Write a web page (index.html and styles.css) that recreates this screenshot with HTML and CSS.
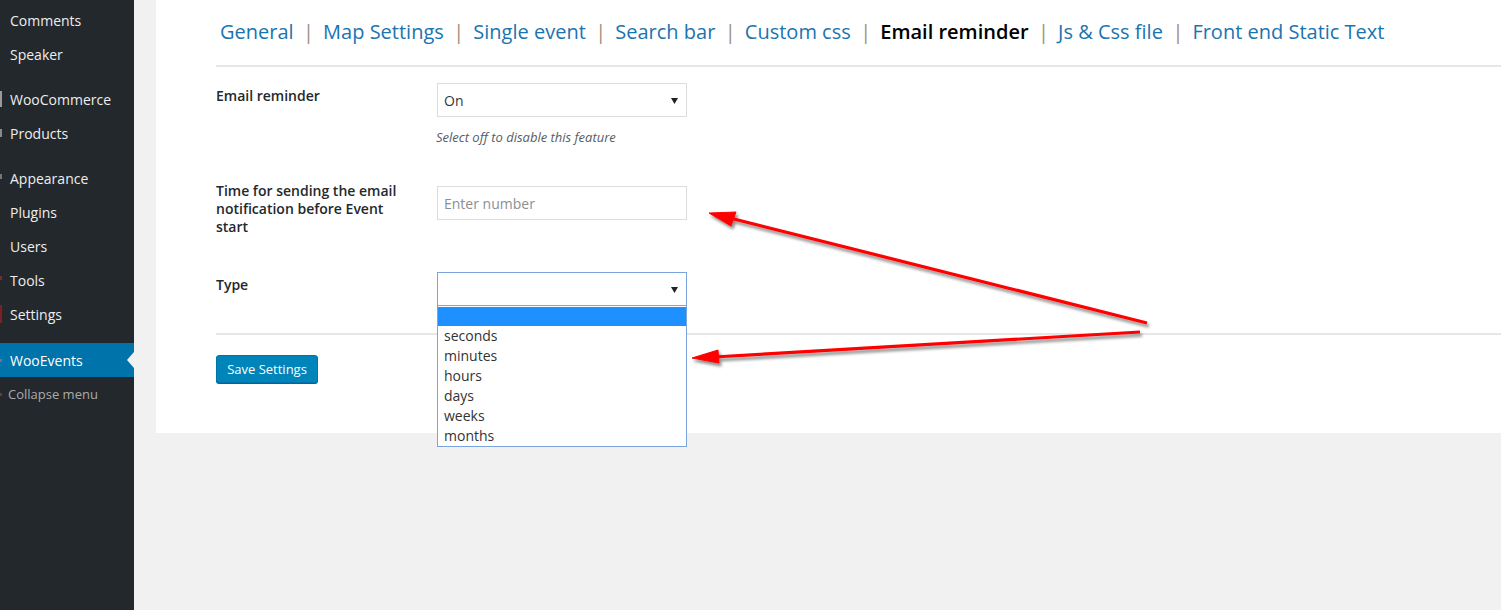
FILE: index.html
```html
<!DOCTYPE html>
<html>
<head>
<meta charset="utf-8">
<link rel="stylesheet" href="styles.css">
</head>
<body>
<div class="layout">
  <nav class="sidebar">
    <div class="menu-item"><span class="ico"></span><span class="txt">Comments</span></div>
    <div class="menu-item"><span class="ico"></span><span class="txt">Speaker</span></div>
    <div class="menu-sep"></div>
    <div class="menu-item"><span class="ico ico-woo"></span><span class="txt">WooCommerce</span></div>
    <div class="menu-item"><span class="ico ico-prod"></span><span class="txt">Products</span></div>
    <div class="menu-sep"></div>
    <div class="menu-item"><span class="ico ico-app"></span><span class="txt">Appearance</span></div>
    <div class="menu-item"><span class="ico"></span><span class="txt">Plugins</span></div>
    <div class="menu-item"><span class="ico"></span><span class="txt">Users</span></div>
    <div class="menu-item"><span class="ico ico-tools"></span><span class="txt">Tools</span></div>
    <div class="menu-item"><span class="ico ico-set"></span><span class="txt">Settings</span></div>
    <div class="menu-sep sep-12"></div>
    <div class="menu-item current"><span class="ico ico-we"></span><span class="txt">WooEvents</span><span class="notch"></span></div>
    <div class="menu-item collapse"><span class="ico ico-col"></span><span class="txt">Collapse menu</span></div>
  </nav>
  <main class="content">
    <div class="panel">
      <div class="tabs">
        <a class="tab">General</a><span class="sep">|</span>
        <a class="tab">Map Settings</a><span class="sep">|</span>
        <a class="tab">Single event</a><span class="sep">|</span>
        <a class="tab">Search bar</a><span class="sep">|</span>
        <a class="tab">Custom css</a><span class="sep">|</span>
        <a class="tab active">Email reminder</a><span class="sep">|</span>
        <a class="tab">Js &amp; Css file</a><span class="sep">|</span>
        <a class="tab">Front end Static Text</a>
      </div>
      <div class="rule"></div>
      <div class="form">
        <div class="row row-1">
          <div class="label">Email reminder</div>
          <div class="field">
            <div class="select"><span>On</span><svg class="caret" width="7" height="6" viewBox="0 0 7 6"><path d="M0 0H7L3.5 6Z" fill="#222"/></svg></div>
            <p class="desc">Select off to disable this feature</p>
          </div>
        </div>
        <div class="row row-2">
          <div class="label">Time for sending the email notification before Event start</div>
          <div class="field">
            <div class="input"><span class="ph">Enter number</span></div>
          </div>
        </div>
        <div class="row row-3">
          <div class="label">Type</div>
          <div class="field">
            <div class="select focus"><span></span><svg class="caret" width="7" height="6" viewBox="0 0 7 6"><path d="M0 0H7L3.5 6Z" fill="#222"/></svg></div>
            <ul class="dropdown">
              <li class="hl"></li>
              <li>seconds</li>
              <li>minutes</li>
              <li>hours</li>
              <li>days</li>
              <li>weeks</li>
              <li>months</li>
            </ul>
          </div>
        </div>
      </div>
      <div class="rule rule-bottom"></div>
      <div class="actions"><button class="btn">Save Settings</button></div>
    </div>
  </main>
</div>
<svg class="arrows" width="1501" height="610" viewBox="0 0 1501 610">
  <defs>
    <filter id="sh" x="-10%" y="-50%" width="120%" height="200%">
      <feDropShadow dx="2" dy="3" stdDeviation="1.6" flood-color="#000" flood-opacity="0.45"/>
    </filter>
  </defs>
  <g filter="url(#sh)" fill="#ff0000" stroke="#ff0000">
    <line x1="1147" y1="323" x2="730" y2="218" stroke-width="3.2"/>
    <path d="M709 213 L736 212 L731 226 Z" stroke-width="1"/>
    <line x1="1140" y1="332" x2="714" y2="357" stroke-width="3.2"/>
    <path d="M692 358 L718 350 L719 363 Z" stroke-width="1"/>
  </g>
</svg>
</body>
</html>
```
FILE: styles.css
```css
html, body {
  margin: 0;
  padding: 0;
  height: 100%;
  overflow: hidden;
}
body {
  background: #f1f1f1;
  font-family: "Open Sans", "Noto Sans", sans-serif;
  color: #23282d;
  position: relative;
}
.layout {
  display: flex;
  height: 610px;
}
.sidebar {
  width: 134px;
  flex: none;
  background: #23282d;
  padding-top: 3px;
  box-sizing: border-box;
}
.menu-item {
  height: 34px;
  display: flex;
  align-items: center;
  position: relative;
  font-size: 14px;
  color: #eeeeee;
}
.menu-item .ico {
  width: 2px;
  height: 16px;
  flex: none;
}
.menu-item .txt {
  margin-left: 8px;
}
.ico-woo { background: #9a9a9a; height: 16px; }
.ico-prod { background: #8a8a8a; height: 8px !important; }
.ico-app { background: #777; height: 5px !important; margin-top: -4px; }
.ico-tools { background: #7a2b2b; height: 4px !important; margin-top: -4px; }
.ico-set { background: #7d1f24; height: 18px !important; }
.ico-we { background: #7a6f8a; height: 3px !important; }
.ico-col { background: #6a3a3a; height: 3px !important; }
.menu-sep { height: 11px; }
.menu-sep.sep-12 { height: 12px; }
.menu-item.current {
  background: #0073aa;
  color: #fff;
}
.notch {
  position: absolute;
  right: 0;
  top: 9px;
  width: 0;
  height: 0;
  border-top: 8px solid transparent;
  border-bottom: 8px solid transparent;
  border-right: 7px solid #f1f1f1;
}
.menu-item.collapse {
  font-size: 13px;
  color: #aaaaaa;
}
.menu-item.collapse .txt { margin-left: 6px; }

.content {
  flex: 1;
  padding-left: 22px;
  min-width: 0;
}
.panel {
  background: #fff;
  height: 433px;
  padding-left: 60px;
  box-sizing: border-box;
}
.tabs {
  display: flex;
  align-items: center;
  height: 65px;
  padding-left: 4px;
  font-size: 20px;
  padding-bottom: 2px;
  box-sizing: border-box;
}
.tab {
  color: #1a74b0;
  white-space: nowrap;
}
.tab.active {
  color: #000;
  font-weight: 600;
}
.sep {
  color: #9c8d7c;
  margin: 0 9px 0 9.5px;
  font-size: 20px;
}
.rule {
  height: 2px;
  background: #e6e6e6;
}
.form {
  display: flex;
  flex-direction: column;
}
.row {
  display: flex;
  align-items: flex-start;
}
.label {
  width: 200px;
  padding: 20px 21px 20px 0;
  font-size: 14px;
  font-weight: 600;
  line-height: 18px;
  flex: none;
}
.field {
  position: relative;
  padding-top: 16px;
}
.row-1 { height: 95px; }
.row-2 { height: 94px; }
.row-2 .field { padding-top: 24px; }
.row-3 { height: 77px; }
.select, .input {
  width: 250px;
  height: 34px;
  box-sizing: border-box;
  border: 1px solid #dddddd;
  display: flex;
  align-items: center;
  padding: 0 8px 0 6px;
  font-size: 14px;
  color: #32373c;
  background: #fff;
}
.select {
  justify-content: space-between;
}
.select .caret { margin-top: 1px; }
.select.focus {
  border-color: #7ba3dd;
}
.input .ph { color: #8a8f94; }
.desc {
  margin: 11px 0 0 -1px;
  font-size: 13px;
  font-style: italic;
  color: #555d66;
  line-height: 18px;
}
.dropdown {
  position: absolute;
  left: 0;
  top: 50px;
  width: 250px;
  box-sizing: border-box;
  margin: 0;
  padding: 0;
  list-style: none;
  border: 1px solid #7ba3dd;
  border-top: none;
  background: #fff;
  z-index: 2;
}
.dropdown li {
  height: 20px;
  line-height: 20px;
  padding-left: 6px;
  font-size: 14px;
  color: #333;
}
.dropdown li.hl {
  height: 19px;
  margin-top: 1px;
  background: #1e90ff;
}
.rule-bottom {
  margin-top: 0;
}
.actions {
  padding-top: 20px;
}
.btn {
  height: 28px;
  padding: 0 10px;
  background: #0085ba;
  border: 1px solid #0073aa;
  border-radius: 3px;
  box-shadow: 0 1px 0 #006799;
  color: #fff;
  font-family: "Open Sans", "Noto Sans", sans-serif;
  font-size: 13px;
  width: 102px;
}
.arrows {
  position: absolute;
  left: 0;
  top: 0;
  pointer-events: none;
  z-index: 5;
}
```
